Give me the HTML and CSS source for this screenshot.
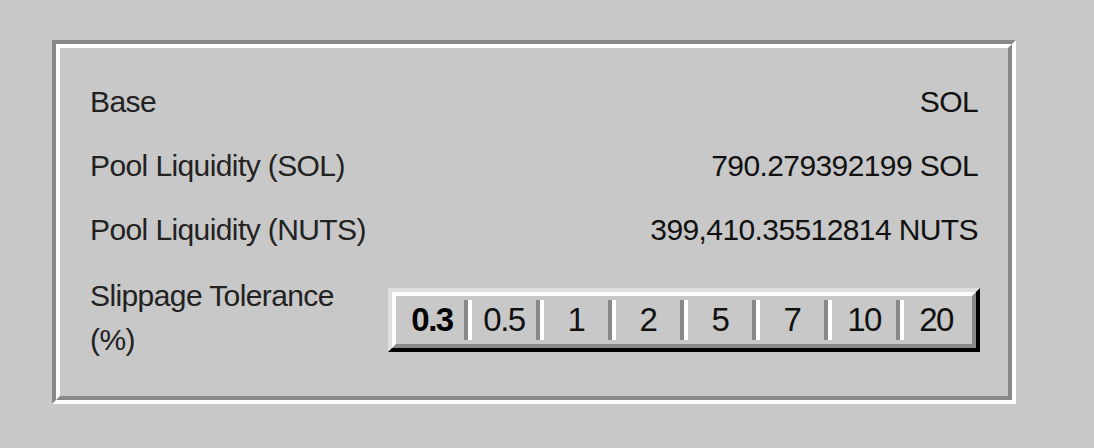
FILE: index.html
```html
<!DOCTYPE html>
<html>
<head>
<meta charset="utf-8">
<link rel="stylesheet" href="styles.css">
</head>
<body>
<div class="panel">
  <div class="panel-inner">
    <div class="row">
      <span class="label">Base</span>
      <span class="value">SOL</span>
    </div>
    <div class="row">
      <span class="label">Pool Liquidity (SOL)</span>
      <span class="value">790.279392199 SOL</span>
    </div>
    <div class="row">
      <span class="label">Pool Liquidity (NUTS)</span>
      <span class="value">399,410.35512814 NUTS</span>
    </div>
    <div class="row slip">
      <span class="label slip-label">Slippage Tolerance (%)</span>
      <div class="seg">
        <div class="seg-inner">
          <span class="cell active">0.3</span><span class="sep"></span>
          <span class="cell">0.5</span><span class="sep"></span>
          <span class="cell">1</span><span class="sep"></span>
          <span class="cell">2</span><span class="sep"></span>
          <span class="cell">5</span><span class="sep"></span>
          <span class="cell">7</span><span class="sep"></span>
          <span class="cell">10</span><span class="sep"></span>
          <span class="cell">20</span>
        </div>
      </div>
    </div>
  </div>
</div>
</body>
</html>
```

FILE: styles.css
```css
html, body {
  margin: 0;
  padding: 0;
  background: #c8c8c8;
}
body {
  padding: 40px 0 0 52px;
  font-family: "Liberation Sans", Arial, sans-serif;
  color: #222;
}
.panel {
  width: 964px;
  height: 364px;
  box-sizing: border-box;
  border-style: solid;
  border-width: 4px;
  border-color: #888 #fff #fff #888;
}
.panel-inner {
  height: 100%;
  box-sizing: border-box;
  border-style: solid;
  border-width: 4px;
  border-color: #fff #888 #888 #fff;
  padding: 22px 28px 0 30px;
}
.row {
  display: flex;
  justify-content: space-between;
  height: 64px;
  line-height: 64px;
  font-size: 30px;
  letter-spacing: -0.6px;
}
.value {
  color: #111;
  padding-right: 2px;
}
.row.slip {
  height: auto;
  line-height: 44px;
  align-items: flex-start;
  padding-top: 12px;
}
.slip-label {
  width: 280px;
}
.seg {
  margin-top: 14px;
  width: 592px;
  height: 64px;
  box-sizing: border-box;
  border-style: solid;
  border-width: 4px;
  border-color: #dfdfdf #000 #000 #dfdfdf;
}
.seg-inner {
  height: 100%;
  box-sizing: border-box;
  border-style: solid;
  border-width: 4px;
  border-color: #fff #888 #888 #fff;
  padding: 4px 4px 0 4px;
  display: flex;
  align-items: flex-start;
}
.cell {
  width: 64px;
  height: 40px;
  line-height: 40px;
  text-align: center;
  font-size: 33px;
  letter-spacing: -1.5px;
  color: #111;
}
.cell.active {
  font-weight: bold;
  color: #000;
}
.sep {
  width: 4px;
  height: 40px;
  background: #888;
  border-right: 4px solid #fff;
}
```
